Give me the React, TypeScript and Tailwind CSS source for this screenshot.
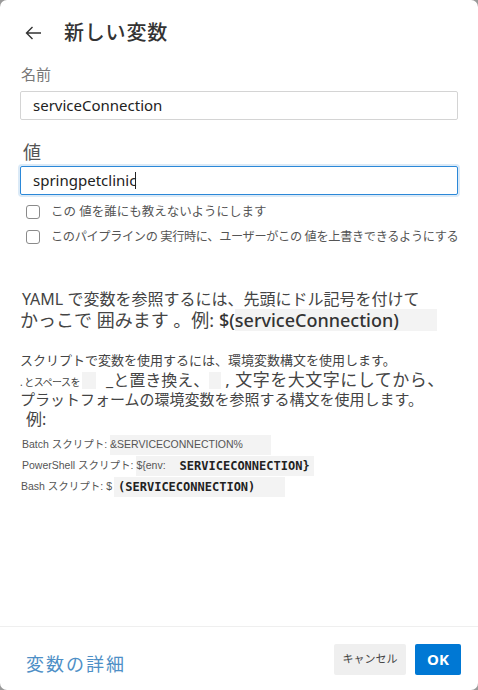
import React from "react";

const F = { fontFamily: '"Noto Sans", "Noto Sans CJK JP", sans-serif' };
const L = { fontFamily: '"Liberation Sans", "Noto Sans CJK JP", sans-serif' };
const M = { fontFamily: '"DejaVu Sans Mono", monospace' };

export default function App() {
  return (
    <div className="w-[478px] h-[690px] bg-[#9a9a9a]" style={F}>
      <div className="w-full h-full bg-white rounded-[7px] flex flex-col overflow-hidden">
        <div className="flex items-center pl-[25px] pt-[19px] h-[46px]">
          <svg width="17" height="14" viewBox="0 0 17 14" fill="none" stroke="#333" strokeWidth="1.4">
            <path d="M16 7H1.5M7.5 1L1.5 7l6 6" />
          </svg>
          <div className="ml-[22px] text-[20px] leading-none text-[#333] tracking-[0.8px] font-medium">新しい変数</div>
        </div>

        <div className="px-[20px]">
          <div className="mt-[18px] text-[15px] leading-[20px] text-[#777] pl-[1px]">名前</div>
          <div className="mt-[7px] h-[29px] border border-[#d4d4d4] rounded-[2px] flex items-center pl-[12px] text-[15px] text-[#222]">
            serviceConnection
          </div>

          <div className="mt-[21px] text-[18px] leading-[22px] text-[#555] pl-[3px]">値</div>
          <div className="mt-[3px] h-[29px] border border-[#2b88d8] rounded-[2px] shadow-[0_0_0_2px_#dbeaf7] flex items-center pl-[12px] text-[15px] text-[#222]">
            springpetclini<span>c</span><span className="inline-block w-[1px] h-[17px] bg-[#222] -ml-[1px]"></span>
          </div>

          <div className="mt-[9px] flex items-center h-[16px] pl-[6px]">
            <div className="shrink-0 w-[14px] h-[14px] border border-[#8a8a8a] rounded-[3px]"></div>
            <div className="ml-[11px] text-[12.5px] text-[#555]">この 値を誰にも教えないようにします</div>
          </div>
          <div className="mt-[9px] flex items-center h-[16px] pl-[6px]">
            <div className="shrink-0 w-[14px] h-[14px] border border-[#8a8a8a] rounded-[3px]"></div>
            <div className="ml-[11px] text-[12.2px] text-[#555] whitespace-nowrap tracking-[-0.35px]">このパイプラインの 実行時に、ユーザーがこの 値を上書きできるようにする</div>
          </div>

          <div className="mt-[44px] text-[#444]">
            <div className="text-[16px] leading-[20px] whitespace-nowrap pl-[2px]">YAML で変数を参照するには、先頭にドル記号を付けて</div>
            <div className="text-[18px] leading-[22px] whitespace-nowrap flex items-center">
              <span>かっこで 囲みます 。例:&nbsp;</span>
              <span className="text-[#333] font-medium">$(</span>
              <span className="bg-[#f3f3f3] pr-[38px] text-[#333] font-medium">serviceConnection)</span>
            </div>
          </div>

          <div className="mt-[21px] text-[#444]">
            <div className="text-[13px] leading-[17px] whitespace-nowrap">スクリプトで変数を使用するには、環境変数構文を使用します。</div>
            <div className="flex items-end whitespace-nowrap h-[20px]">
              <span className="text-[10px] leading-[13px] tracking-[-0.5px]">. とスペースを</span>
              <span className="bg-[#f3f3f3] w-[14px] h-[17px] inline-block ml-[2px]"></span>
              <span className="text-[16px] leading-[18px] ml-[10px]">_と置き換え、</span>
              <span className="bg-[#f3f3f3] w-[12px] h-[17px] inline-block"></span>
              <span className="text-[17px] leading-[18px] ml-[4px] tracking-[0.5px]">, 文字を大文字にしてから、</span>
            </div>
            <div className="text-[15px] leading-[19px] whitespace-nowrap mt-[1px]">プラットフォームの環境変数を参照する構文を使用します。</div>
            <div className="text-[16px] leading-[20px] pl-[6px]">例:</div>
          </div>

          <div className="mt-[6px] text-[10.5px] text-[#555] pl-[2px]" style={L}>
            <div className="flex items-center h-[20px]">
              <span>Batch スクリプト:&nbsp;</span>
              <span className="bg-[#f3f3f3] h-[20px] flex items-center pr-[28px]">&amp;SERVICECONNECTION%</span>
            </div>
            <div className="flex items-center h-[20px] mt-[1px]">
              <span>PowerShell スクリプト:&nbsp;</span>
              <span className="bg-[#f3f3f3] h-[20px] flex items-center pr-[4px]">
                ${"{"}env:
                <span className="ml-[14px] text-[12px] text-[#222] font-semibold" style={M}>SERVICECONNECTION{"}"}</span>
              </span>
            </div>
            <div className="flex items-center h-[20px] mt-[1px]">
              <span className="-ml-[1px]">Bash スクリプト: $</span>
              <span className="bg-[#f3f3f3] h-[20px] flex items-center pr-[30px] ml-[2px]">
                <span className="ml-[4px] text-[12px] text-[#222] font-semibold" style={M}>(SERVICECONNECTION)</span>
              </span>
            </div>
          </div>
        </div>

        <div className="flex-1"></div>
        <div className="h-[1px] bg-[#efefef]"></div>
        <div className="h-[63px] flex items-center pl-[26px] pr-[17px]">
          <div className="text-[18px] text-[#4e8fc6] tracking-[2px] mt-[12px]">変数の詳細</div>
          <div className="flex-1"></div>
          <button className="w-[72px] h-[31px] bg-[#efefef] rounded-[2px] text-[11px] text-[#444] mt-[1px]">キャンセル</button>
          <button className="ml-[9px] w-[46px] h-[31px] bg-[#0078d4] rounded-[2px] text-[15px] text-white font-bold mt-[1px]">OK</button>
        </div>
      </div>
    </div>
  );
}
